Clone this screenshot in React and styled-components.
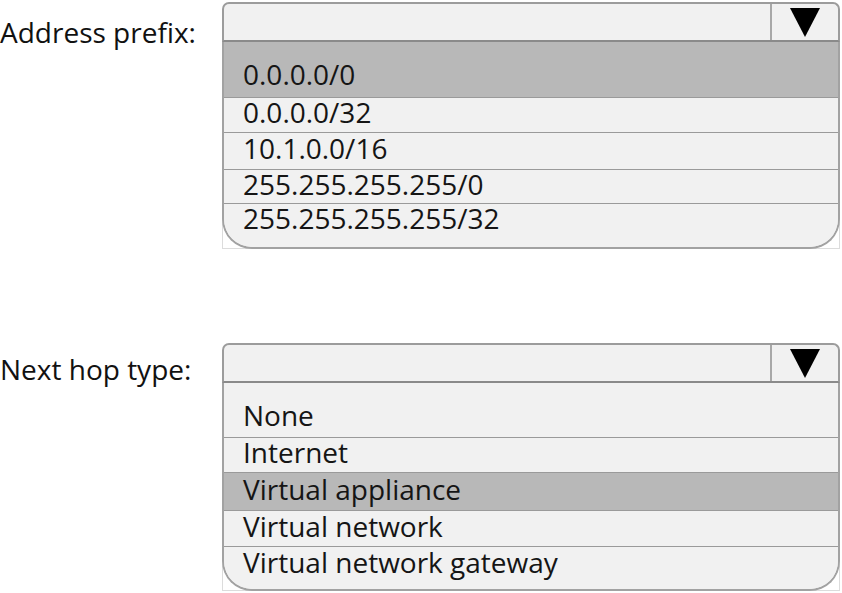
import React from "react";
import styled, { createGlobalStyle } from "styled-components";

const Global = createGlobalStyle`
  html, body { margin: 0; padding: 0; background: #ffffff; }
  body { font-family: "Open Sans", "Noto Sans", sans-serif; color: #1a1a1a; }
`;

const Page = styled.div`
  width: 842px;
  height: 593px;
  padding-top: 2px;
  box-sizing: border-box;
  display: flex;
  flex-direction: column;
  gap: 94px;
  overflow: hidden;
`;

const Field = styled.div`
  display: flex;
  align-items: flex-start;
`;

const Label = styled.div`
  width: 222px;
  flex: none;
  font-size: 28px;
  line-height: 38px;
  padding-top: ${(p) => p.$offset}px;
  color: #111;
  white-space: nowrap;
`;

const Dropdown = styled.div`
  width: 618px;
  display: flex;
  flex-direction: column;
`;

const Header = styled.div`
  height: 40px;
  box-sizing: border-box;
  display: flex;
  background: #f1f1f1;
  border: 2px solid #9c9c9c;
  border-bottom-color: #8a8a8a;
  border-radius: 7px 7px 0 0;
`;

const HeaderValue = styled.div`
  flex: 1;
`;

const ArrowCell = styled.div`
  width: 66px;
  flex: none;
  border-left: 2px solid #a8a8a8;
  display: flex;
  align-items: center;
  justify-content: center;
`;

const Triangle = styled.div`
  width: 0;
  height: 0;
  border-left: 15px solid transparent;
  border-right: 15px solid transparent;
  border-top: 29px solid #000;
  margin-top: 1px;
`;

const ListFrame = styled.div`
  border: 1px solid #dcdcdc;
  border-top: none;
`;

const List = styled.div`
  display: flex;
  flex-direction: column;
  background: #f1f1f1;
  border: 2px solid #a2a2a2;
  border-top: none;
  border-radius: 0 0 30px 30px;
  overflow: hidden;
  margin: 0 -1px -1px -1px;
`;

const Row = styled.div`
  height: ${(p) => p.$h}px;
  box-sizing: border-box;
  padding: 0 0 ${(p) => p.$pb}px 19px;
  display: flex;
  align-items: flex-end;
  font-size: 28px;
  line-height: 31px;
  color: #151515;
  background: ${(p) => (p.$selected ? "#b8b8b8" : "#f1f1f1")};
  border-top: ${(p) => (p.$first ? "none" : "1px solid #9a9a9a")};
  white-space: nowrap;
`;

const fields = [
  {
    label: "Address prefix:",
    labelOffset: 11,
    rows: [
      { text: "0.0.0.0/0", h: 55, pb: 7, selected: true },
      { text: "0.0.0.0/32", h: 35, pb: 4 },
      { text: "10.1.0.0/16", h: 37, pb: 5 },
      { text: "255.255.255.255/0", h: 34, pb: 3 },
      { text: "255.255.255.255/32", h: 44, pb: 13 },
    ],
  },
  {
    label: "Next hop type:",
    labelOffset: 7,
    rows: [
      { text: "None", h: 54, pb: 6 },
      { text: "Internet", h: 35, pb: 4 },
      { text: "Virtual appliance", h: 38, pb: 5, selected: true },
      { text: "Virtual network", h: 36, pb: 4 },
      { text: "Virtual network gateway", h: 43, pb: 11 },
    ],
  },
];

export default function App() {
  return (
    <>
      <Global />
      <Page>
        {fields.map((f) => (
          <Field key={f.label}>
            <Label $offset={f.labelOffset}>{f.label}</Label>
            <Dropdown>
              <Header>
                <HeaderValue />
                <ArrowCell>
                  <Triangle />
                </ArrowCell>
              </Header>
              <ListFrame>
                <List>
                  {f.rows.map((r, i) => (
                    <Row
                      key={r.text}
                      $h={r.h}
                      $pb={r.pb}
                      $first={i === 0}
                      $selected={r.selected}
                    >
                      {r.text}
                    </Row>
                  ))}
                </List>
              </ListFrame>
            </Dropdown>
          </Field>
        ))}
      </Page>
    </>
  );
}
